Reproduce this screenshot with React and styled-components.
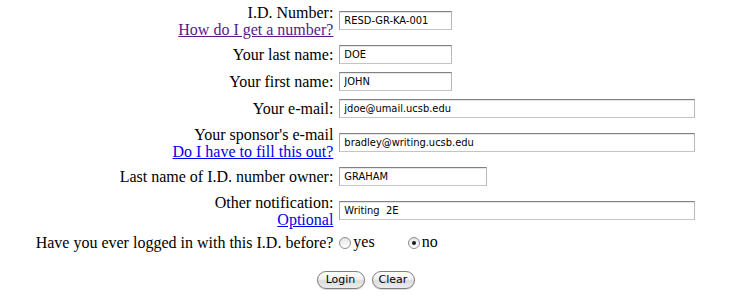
import React from 'react';
import styled, { createGlobalStyle } from 'styled-components';

const GlobalStyle = createGlobalStyle`
  html, body {
    margin: 0;
    padding: 0;
    background: #fff;
  }
  body {
    font-family: 'Liberation Serif', 'Times New Roman', serif;
    font-size: 16px;
    color: #000;
  }
`;

const Page = styled.div`
  width: 740px;
  height: 305px;
  box-sizing: border-box;
  padding: 0 9px 0 0;
  display: flex;
  flex-direction: column;
  align-items: center;
`;

const FormGrid = styled.div`
  display: grid;
  grid-template-columns: max-content max-content;
  column-gap: 6px;
  justify-content: center;
`;

const Label = styled.div`
  min-height: ${(p) => (p.$double ? '41px' : p.$short ? '22px' : '27px')};
  box-sizing: border-box;
  display: flex;
  flex-direction: column;
  justify-content: center;
  align-items: flex-end;
  text-align: right;
  line-height: 17px;
  padding: 2px 0;
`;

const Field = styled.div`
  display: flex;
  align-items: center;
`;

const HelpLink = styled.a`
  color: ${(p) => (p.$visited ? '#551a8b' : '#0000ee')};
  text-decoration: underline;
  cursor: pointer;
`;

const TextInput = styled.input`
  width: ${(p) => p.$w}px;
  height: 19px;
  box-sizing: border-box;
  margin: 0;
  padding: 0 4px;
  border: 1px solid #c4c4c4;
  border-top-color: #828282;
  border-left-color: #aaaaaa;
  border-right-color: #b8b8b8;
  box-shadow: inset 0 1px 0 #e6e6e6;
  background: #fff;
  font-family: 'DejaVu Sans Condensed', 'DejaVu Sans', sans-serif;
  font-stretch: condensed;
  font-size: 11px;
  color: #000;
  outline: none;
`;

const Option = styled.label`
  display: flex;
  align-items: center;
  gap: 2px;
  margin-left: ${(p) => p.$offset || 0}px;
`;

const Radio = styled.input.attrs({ type: 'radio' })`
  appearance: none;
  -webkit-appearance: none;
  width: 12px;
  height: 12px;
  margin: 1px 0 0;
  border-radius: 50%;
  border: 1px solid #8c8c8c;
  box-sizing: border-box;
  background: linear-gradient(#e4e4e4, #ffffff);
  position: relative;

  &:checked::after {
    content: '';
    position: absolute;
    left: 3px;
    top: 3px;
    width: 4px;
    height: 4px;
    border-radius: 50%;
    background: #1a1a1a;
  }
`;

const ButtonRow = styled.div`
  display: flex;
  gap: 7px;
  margin-top: 18px;
`;

const PillButton = styled.button`
  width: ${(p) => p.$w}px;
  height: 18px;
  padding: 0;
  border: 1px solid #7f7f7f;
  border-radius: 9px;
  background: linear-gradient(#ffffff 0%, #f1f1f1 45%, #dcdcdc 55%, #ececec 100%);
  box-shadow: 0 1px 1px rgba(0, 0, 0, 0.15);
  font-family: 'DejaVu Sans', 'Liberation Sans', sans-serif;
  font-size: 11px;
  color: #000;
  line-height: 16px;
`;

const rows = [
  { label: 'I.D. Number:', link: 'How do I get a number?', visited: true, value: 'RESD-GR-KA-001', w: 113 },
  { label: 'Your last name:', value: 'DOE', w: 113 },
  { label: 'Your first name:', value: 'JOHN', w: 113 },
  { label: 'Your e-mail:', value: 'jdoe@umail.ucsb.edu', w: 356 },
  { label: "Your sponsor's e-mail", link: 'Do I have to fill this out?', value: 'bradley@writing.ucsb.edu', w: 356 },
  { label: 'Last name of I.D. number owner:', value: 'GRAHAM', w: 148 },
  { label: 'Other notification:', link: 'Optional', value: 'Writing  2E', w: 356 },
];

export default function App() {
  return (
    <>
      <GlobalStyle />
      <Page>
        <FormGrid>
          {rows.map((r) => (
            <React.Fragment key={r.label}>
              <Label $double={!!r.link}>
                <span>{r.label}</span>
                {r.link && <HelpLink $visited={r.visited}>{r.link}</HelpLink>}
              </Label>
              <Field>
                <TextInput $w={r.w} defaultValue={r.value} spellCheck={false} />
              </Field>
            </React.Fragment>
          ))}
          <Label $short>Have you ever logged in with this I.D. before?</Label>
          <Field>
            <Option>
              <Radio name="before" />
              yes
            </Option>
            <Option $offset={33}>
              <Radio name="before" defaultChecked />
              no
            </Option>
          </Field>
        </FormGrid>
        <ButtonRow>
          <PillButton $w={48}>Login</PillButton>
          <PillButton $w={43}>Clear</PillButton>
        </ButtonRow>
      </Page>
    </>
  );
}
